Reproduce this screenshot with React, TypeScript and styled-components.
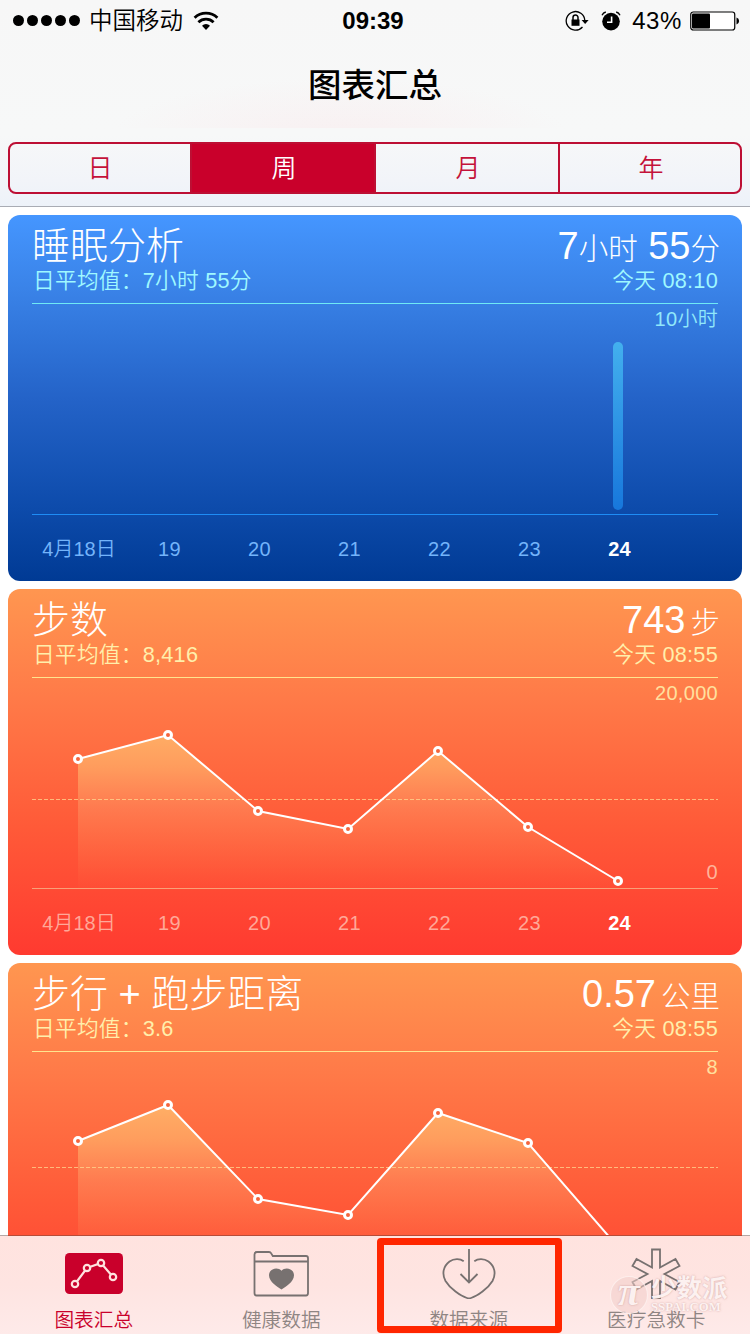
import React from "react";
import styled, { createGlobalStyle, css } from "styled-components";

const Global = createGlobalStyle`
  * { box-sizing: border-box; }
  body {
    margin: 0;
    background: #fff;
    font-family: "Liberation Sans", "Noto Sans CJK SC", sans-serif;
    font-weight: 350;
  }
`;

const Screen = styled.div`
  width: 750px;
  height: 1334px;
  display: flex;
  flex-direction: column;
  overflow: hidden;
  background: #fff;
`;

const Header = styled.header`
  flex: none;
  height: 207px;
  border-bottom: 1px solid #a9acb4;
  background:
    radial-gradient(ellipse 230px 60px at 340px 138px, rgba(250, 228, 231, 0.42), rgba(250, 228, 231, 0) 100%) 0 0 / 750px 128px no-repeat,
    linear-gradient(#f7f7f7 0, #f7f8f8 135px, #f2f4f9 180px, #edf2f9 206px);
`;

const StatusBar = styled.div`
  display: grid;
  grid-template-columns: 1fr auto 1fr;
  align-items: center;
  height: 40px;
  padding: 1px 10px 0 10px;
  color: #000;
`;

const StatusGroup = styled.div<{ $end?: boolean }>`
  display: flex;
  align-items: center;
  justify-content: ${(p) => (p.$end ? "flex-end" : "flex-start")};
`;

const Signal = styled.div`
  display: flex;
  gap: 3px;
  margin: 0 9px 0 3px;
`;

const Dot = styled.i`
  width: 11px;
  height: 11px;
  border-radius: 50%;
  background: #000;
`;

const Carrier = styled.span`
  font-size: 23.5px;
  line-height: 38px;
  margin-right: 10px;
`;

const Clock = styled.span`
  font-size: 24px;
  font-weight: 700;
  line-height: 38px;
  padding-right: 4px;
`;

const Percent = styled.span`
  font-size: 24px;
  line-height: 38px;
  letter-spacing: 0.6px;
  margin: 0 8px 0 11px;
`;

const Title = styled.h1`
  margin: 0;
  height: 102px;
  padding-top: 21px;
  font-size: 33.5px;
  line-height: 50px;
  font-weight: 500;
  text-align: center;
  color: #000;
`;

const Segments = styled.div`
  display: grid;
  grid-template-columns: 182px 184px 184px 1fr;
  margin: 0 8px;
  height: 52px;
  border: 2px solid #bd0f34;
  border-radius: 8px;
  overflow: hidden;
`;

const Segment = styled.button<{ $active?: boolean }>`
  border: 0;
  border-right: 2px solid #bd0f34;
  padding: 0;
  font: inherit;
  font-size: 25px;
  line-height: 46px;
  color: ${(p) => (p.$active ? "#fff" : "#c4123a")};
  background: ${(p) => (p.$active ? "#c9002b" : "transparent")};
  &:not(:first-child) { padding-left: 2px; }
  &:last-child { border-right: 0; }
`;

const Feed = styled.main`
  flex: 1;
  min-height: 0;
  overflow: hidden;
  display: flex;
  flex-direction: column;
  gap: 8px;
  padding: 8px 8px 0;
`;

type Tone = "blue" | "orange";

const tones = {
  blue: {
    bg: "linear-gradient(#4596ff, #3a83e8 20%, #2463c8 50%, #0d4bab 80%, #003a94)",
    accent: "#9ff8ff",
    line: "#6fe9f5",
    base: "#1e8cf5",
    date: "#74b4fa",
  },
  orange: {
    bg: "linear-gradient(#ff9650, #ff7a48 30%, #ff5a38 65%, #ff3a30)",
    accent: "#ffefab",
    line: "#ffe48e",
    base: "#f8a078",
    date: "#ffa898",
  },
};

const CardBox = styled.section<{ $tone: Tone }>`
  flex: none;
  height: 366px;
  padding: 0 24px;
  border-radius: 12px;
  color: ${(p) => tones[p.$tone].accent};
  background: ${(p) => tones[p.$tone].bg};
`;

const CardHead = styled.div<{ $tone: Tone }>`
  height: 89px;
  padding-top: 8px;
  border-bottom: 1px solid ${(p) => tones[p.$tone].line};
`;

const HeadRow = styled.div<{ $large?: boolean }>`
  display: flex;
  justify-content: space-between;
  ${(p) =>
    p.$large
      ? css`
          height: 45px;
          line-height: 46px;
          font-size: 38px;
          font-weight: 300;
          color: #fff;
        `
      : css`
          height: 26px;
          line-height: 26px;
          padding-left: 1px;
          font-size: 21.7px;
          letter-spacing: 0.25px;
        `}
`;

const Value = styled.span`
  white-space: pre;
  margin-right: -2px;
`;

const Unit = styled.small<{ $gap?: number }>`
  font-size: 29.5px;
  margin-left: ${(p) => p.$gap ?? 0}px;
`;

const Plot = styled.div<{ $tone: Tone }>`
  display: grid;
  height: 211px;
  border-bottom: 1px solid ${(p) => tones[p.$tone].base};
  > * { grid-area: 1 / 1; }
`;

const Chart = styled.svg`
  display: block;
  width: 686px;
  height: 210px;
`;

const Scale = styled.div`
  display: flex;
  flex-direction: column;
  justify-content: space-between;
  align-items: flex-end;
  padding: 3px 0 4px;
  font-size: 20px;
  line-height: 24px;
  letter-spacing: 0.3px;
`;

const ScaleLabel = styled.span<{ $floor?: boolean }>`
  ${(p) => (p.$floor ? "color: #ffb49a;" : "opacity: 0.87;")}
`;

const Dates = styled.div<{ $tone: Tone }>`
  display: grid;
  grid-template-columns: repeat(7, 90px);
  padding: 21px 0 0 2px;
  font-size: 20px;
  line-height: 26px;
  letter-spacing: 0.5px;
  text-align: center;
  white-space: nowrap;
  color: ${(p) => tones[p.$tone].date};
`;

const Day = styled.span<{ $today?: boolean }>`
  &:first-child { letter-spacing: 0; }
  &:not(:first-child) { padding-left: 1px; }
  ${(p) => p.$today && "color: #fff; font-weight: 700; letter-spacing: 0.2px;"}
`;

const days = ["4月18日", "19", "20", "21", "22", "23", "24"];

function LineChart({ id, values, mid }: { id: string; values: number[]; mid: number }) {
  const pts = values.map((y, i) => [46 + i * 90, y]);
  const path = pts.map((p) => p.join(",")).join(" ");
  return (
    <Chart viewBox="0 0 686 210">
      <defs>
        <linearGradient id={id} x1="0" y1="50" x2="0" y2="210" gradientUnits="userSpaceOnUse">
          <stop offset="0" stopColor="#ffb468" stopOpacity="0.95" />
          <stop offset="0.25" stopColor="#ffa864" stopOpacity="0.8" />
          <stop offset="0.5" stopColor="#ff9664" stopOpacity="0.5" />
          <stop offset="1" stopColor="#ff8850" stopOpacity="0.03" />
        </linearGradient>
      </defs>
      <polygon points={`46,210 ${path} 586,210`} fill={`url(#${id})`} />
      <path d={`M0 ${mid}H686`} stroke="#ffd890" strokeWidth="1" strokeDasharray="4 2" opacity="0.75" />
      <polyline points={path} fill="none" stroke="#fff" strokeWidth="2" />
      {pts.map(([x, y]) => (
        <circle key={x} cx={x} cy={y} r="3.5" fill="#f4643c" stroke="#fff" strokeWidth="3" />
      ))}
    </Chart>
  );
}

function SleepChart() {
  return (
    <Chart viewBox="0 0 686 210">
      <defs>
        <linearGradient id="sleep" x1="0" y1="0" x2="0" y2="1">
          <stop offset="0" stopColor="#43b0ee" />
          <stop offset="1" stopColor="#1777dc" />
        </linearGradient>
      </defs>
      <rect x="581" y="38" width="10" height="168" rx="5" fill="url(#sleep)" />
    </Chart>
  );
}

interface CardProps {
  tone: Tone;
  title: string;
  average: string;
  value: React.ReactNode;
  time: string;
  top: string;
  bottom?: string;
  /** The card runs under the tab bar, so its axis labels stay out of view. */
  clipped?: boolean;
  children: React.ReactNode;
}

function Card({ tone, title, average, value, time, top, bottom, clipped, children }: CardProps) {
  return (
    <CardBox $tone={tone}>
      <CardHead $tone={tone}>
        <HeadRow $large>
          <span>{title}</span>
          <Value>{value}</Value>
        </HeadRow>
        <HeadRow>
          <span>日平均值：{average}</span>
          <span>{time}</span>
        </HeadRow>
      </CardHead>
      <Plot $tone={tone}>
        {children}
        <Scale>
          <ScaleLabel>{top}</ScaleLabel>
          {bottom && <ScaleLabel $floor>{bottom}</ScaleLabel>}
        </Scale>
      </Plot>
      {!clipped && (
        <Dates $tone={tone}>
          {days.map((d) => (
            <Day key={d} $today={d === "24"}>{d}</Day>
          ))}
        </Dates>
      )}
    </CardBox>
  );
}

const TabBar = styled.nav`
  position: relative;
  flex: none;
  display: grid;
  grid-template-columns: repeat(4, 1fr);
  height: 99px;
  background: linear-gradient(#ffe3df, #fee4e1 50%, #feeae9);
`;

const TabEdge = styled.i`
  position: absolute;
  inset: 0 0 auto;
  height: 1px;
  background: linear-gradient(90deg, #b5a8a6 8px, #b74c38 8px 742px, #b5a8a6 742px);
`;

const Tab = styled.div<{ $active?: boolean }>`
  display: flex;
  flex-direction: column;
  align-items: center;
  padding-top: 10px;
  font-size: 19.7px;
  line-height: 28px;
  color: ${(p) => (p.$active ? "#c9002b" : "#8f8583")};
  svg { display: block; margin-bottom: 7px; }
`;

const Highlight = styled.i`
  position: absolute;
  left: 377px;
  top: 3px;
  width: 185px;
  height: 95px;
  border: 7px solid #ff2600;
  border-radius: 4px;
`;

const Watermark = styled.div`
  position: absolute;
  left: 610px;
  top: 41px;
  display: flex;
  color: rgba(255, 246, 245, 0.95);
  text-shadow: 0 0 2px rgba(170, 110, 110, 0.55);
`;

const Pi = styled.b`
  width: 38px;
  height: 38px;
  border-radius: 50%;
  background: rgba(240, 205, 203, 0.55);
  border: 1px solid rgba(255, 245, 243, 0.8);
  font: italic 700 40px/30px "Liberation Serif", serif;
  text-align: center;
`;

const MarkText = styled.div`
  display: flex;
  flex-direction: column;
  margin-left: 3px;
`;

const MarkName = styled.b`
  font-size: 25.5px;
  line-height: 25px;
  font-weight: 700;
`;

const MarkSite = styled.b`
  font: 700 12.8px/12px "Liberation Serif", serif;
`;

function WifiIcon() {
  return (
    <svg width="26" height="20" viewBox="0 0 26 20" fill="none" stroke="#000" strokeWidth="2.8">
      <path d="M1.6 6.8a16.4 16.4 0 0 1 22.8 0" />
      <path d="M5.4 11.2a11 11 0 0 1 15.2 0" />
      <path d="M13 19l-4-4.3a5.6 5.6 0 0 1 8 0z" fill="#000" stroke="none" />
    </svg>
  );
}

const LockSvg = styled.svg`
  margin-right: 12px;
`;

function LockIcon() {
  return (
    <LockSvg width="24" height="22" viewBox="0 0 24 22" fill="none" stroke="#000">
      <path d="M19.8 10.5A9.3 9.3 0 1 0 17.5 17" strokeWidth="1.3" />
      <path d="M16.6 10h7l-3.5 4z" fill="#000" stroke="none" />
      <path d="M6.5 9.5h8v6.3h-8z" fill="#000" stroke="none" />
      <path d="M8 10V7.6a2.5 2.5 0 0 1 5 0V10" strokeWidth="1.5" />
    </LockSvg>
  );
}

function AlarmIcon() {
  return (
    <svg width="20" height="20" viewBox="0 0 20 20" fill="none">
      <circle cx="10" cy="10.6" r="8.8" fill="#000" />
      <path d="M1 4.2Q2.2 1.8 4.8 1M19 4.2Q17.8 1.8 15.2 1" stroke="#000" strokeWidth="1.4" />
      <path d="M10.6 5.5v5.8H6" stroke="#fff" strokeWidth="1.6" />
    </svg>
  );
}

function BatteryIcon() {
  return (
    <svg width="50" height="20" viewBox="0 0 50 20">
      <rect x="0.75" y="1" width="44" height="18" rx="2.5" fill="#fff" stroke="#000" strokeWidth="1.2" />
      <rect x="2" y="2.5" width="18" height="15" rx="1" fill="#000" />
      <path d="M46.5 6.5q2.6.8 2.6 3.5t-2.6 3.5z" fill="#000" />
    </svg>
  );
}

function DashboardIcon() {
  return (
    <svg width="58" height="54" viewBox="0 0 58 54">
      <rect y="8" width="58" height="41" rx="4.5" fill="#c9002b" />
      <g fill="#c9002b" stroke="#ffe3df" strokeWidth="2.2">
        <path d="M10 39L22 23L36 18L48 32" fill="none" />
        <circle cx="10" cy="39" r="3.2" />
        <circle cx="22" cy="23" r="3.2" />
        <circle cx="36" cy="18" r="3.2" />
        <circle cx="48" cy="32" r="3.2" />
      </g>
    </svg>
  );
}

function FolderIcon() {
  return (
    <svg width="56" height="54" viewBox="0 0 56 54" fill="none" stroke="#777170" strokeWidth="1.8">
      <path d="M1.5 48V9.5q0-2.5 2.5-2.5H16q1.5 0 2.2 1.4L19.8 11H53q2 0 2 2V48q0 2.500-2 2.500H3.500q-2 0-2-2.500zM1.5 16.500H55" />
      <path d="M28.5 44.5C25 42.5 16 37 16 30.3c0-7 9-9 12.500-4.500c3.500-4.500 12.500-2.500 12.500 4.500c0 6.700-9 12.200-12.500 14.200z" fill="#777170" stroke="none" />
    </svg>
  );
}

function SourceIcon() {
  return (
    <svg width="54" height="54" viewBox="0 0 54 54" fill="none" stroke="#777170" strokeWidth="1.8">
      <path d="M27 4V37M18.5 29L27 37.5L35.5 29" />
      <path d="M21.7 16.2C18 13.5 12 13.5 7.5 16.500C1.5 21-.5 28.500 3.500 36C8 43.500 18.500 51 25 53Q27 53.700 29 53C35.500 51 46 43.500 50.500 36C54.500 28.500 52.500 21 46.500 16.500C42 13.500 36 13.500 32.300 16.200" />
    </svg>
  );
}

function MedicalIcon() {
  return (
    <svg width="50" height="54" viewBox="0 0 50 54" fill="none" stroke="#777170" strokeWidth="1.8">
      <path d="M21 4.5h8v18L44.5 14L48.5 21L33.5 29L48.5 37L44.5 44.5L29 36V53h-8V36L5.5 44.5L1.5 37L16.5 29L1.5 21L5.5 14L21 22.5z" />
    </svg>
  );
}

export default function App() {
  return (
    <Screen>
      <Global />
      <Header>
        <StatusBar>
          <StatusGroup>
            <Signal>
              {[0, 1, 2, 3, 4].map((i) => (
                <Dot key={i} />
              ))}
            </Signal>
            <Carrier>中国移动</Carrier>
            <WifiIcon />
          </StatusGroup>
          <Clock>09:39</Clock>
          <StatusGroup $end>
            <LockIcon />
            <AlarmIcon />
            <Percent>43%</Percent>
            <BatteryIcon />
          </StatusGroup>
        </StatusBar>
        <Title>图表汇总</Title>
        <Segments>
          <Segment>日</Segment>
          <Segment $active>周</Segment>
          <Segment>月</Segment>
          <Segment>年</Segment>
        </Segments>
      </Header>
      <Feed>
        <Card
          tone="blue"
          title="睡眠分析"
          average="7小时 55分"
          value={<>7<Unit>小时</Unit> 55<Unit>分</Unit></>}
          time="今天 08:10"
          top="10小时"
        >
          <SleepChart />
        </Card>
        <Card
          tone="orange"
          title="步数"
          average="8,416"
          value={<>743<Unit $gap={5}>步</Unit></>}
          time="今天 08:55"
          top="20,000"
          bottom="0"
        >
          <LineChart id="steps" values={[81, 57, 133, 151, 73, 149, 203]} mid={121.5} />
        </Card>
        <Card
          tone="orange"
          title="步行 + 跑步距离"
          average="3.6"
          value={<>0.57<Unit $gap={5}>公里</Unit></>}
          time="今天 08:55"
          top="8"
          clipped
        >
          <LineChart id="distance" values={[89, 53, 147, 163, 61, 91, 195]} mid={115.5} />
        </Card>
      </Feed>
      <TabBar>
        <TabEdge />
        <Watermark>
          <Pi>π</Pi>
          <MarkText>
            <MarkName>少数派</MarkName>
            <MarkSite>SSPAI.COM</MarkSite>
          </MarkText>
        </Watermark>
        <Tab $active><DashboardIcon />图表汇总</Tab>
        <Tab><FolderIcon />健康数据</Tab>
        <Tab><SourceIcon />数据来源</Tab>
        <Tab><MedicalIcon />医疗急救卡</Tab>
        <Highlight />
      </TabBar>
    </Screen>
  );
}
